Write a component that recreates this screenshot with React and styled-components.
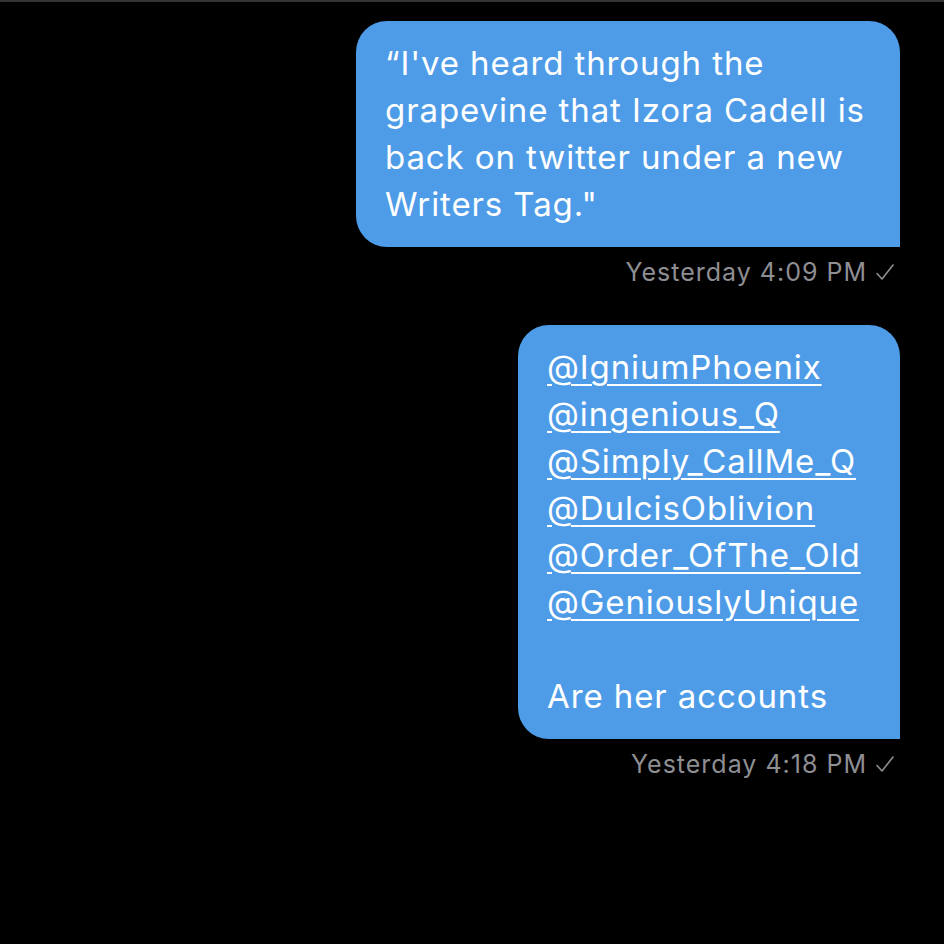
import React from 'react';
import styled, { createGlobalStyle } from 'styled-components';

const GlobalStyle = createGlobalStyle`
  html, body {
    margin: 0;
    padding: 0;
    background: #000;
  }
  body {
    font-family: Inter, "Noto Sans", "Liberation Sans", sans-serif;
    -webkit-font-smoothing: antialiased;
  }
`;

const Screen = styled.div`
  box-sizing: border-box;
  width: 944px;
  height: 944px;
  overflow: hidden;
  background: #000;
  border-top: 2px solid #333336;
  padding: 19px 44px 0 0;
  display: flex;
  flex-direction: column;
  align-items: flex-end;
`;

const MessageGroup = styled.div`
  display: flex;
  flex-direction: column;
  align-items: flex-end;
  margin-bottom: ${p => p.gap || 0}px;
`;

const Bubble = styled.div`
  box-sizing: border-box;
  width: ${p => p.width}px;
  padding: 19px 0 19px 29px;
  background: #4e9ce8;
  color: #fff;
  border-radius: 31px 31px 0 31px;
  font-size: 33px;
  line-height: 47px;
  letter-spacing: 0.9px;
`;

const Line = styled.div`
  white-space: nowrap;
  min-height: 47px;
`;

const Handle = styled.span`
  text-decoration: underline;
  text-decoration-thickness: 1.5px;
  text-underline-offset: 5px;
`;

const Meta = styled.div`
  margin-top: 10px;
  padding-right: 5px;
  display: flex;
  align-items: center;
  gap: 8px;
  color: #8e8e93;
  font-size: 25px;
  line-height: 30px;
  letter-spacing: 1px;
`;

const Check = styled.svg`
  width: 20px;
  height: 18px;
  fill: none;
  stroke: #8e8e93;
  stroke-width: 1.6;
  stroke-linecap: round;
  stroke-linejoin: round;
`;

const Receipt = ({ time }) => (
  <Meta>
    <span>Yesterday {time}</span>
    <Check viewBox="0 0 20 18">
      <path d="M2 10.5 L7 16 L18 2" />
    </Check>
  </Meta>
);

const handles = [
  'IgniumPhoenix',
  'ingenious_Q',
  'Simply_CallMe_Q',
  'DulcisOblivion',
  'Order_OfThe_Old',
  'GeniouslyUnique',
];

export default function App() {
  return (
    <>
      <GlobalStyle />
      <Screen>
        <MessageGroup gap={38}>
          <Bubble width={544}>
            <Line>“I've heard through the</Line>
            <Line>grapevine that Izora Cadell is</Line>
            <Line>back on twitter under a new</Line>
            <Line>Writers Tag."</Line>
          </Bubble>
          <Receipt time="4:09 PM" />
        </MessageGroup>
        <MessageGroup>
          <Bubble width={382}>
            {handles.map(h => (
              <Line key={h}>
                <Handle>@{h}</Handle>
              </Line>
            ))}
            <Line />
            <Line>Are her accounts</Line>
          </Bubble>
          <Receipt time="4:18 PM" />
        </MessageGroup>
      </Screen>
    </>
  );
}
